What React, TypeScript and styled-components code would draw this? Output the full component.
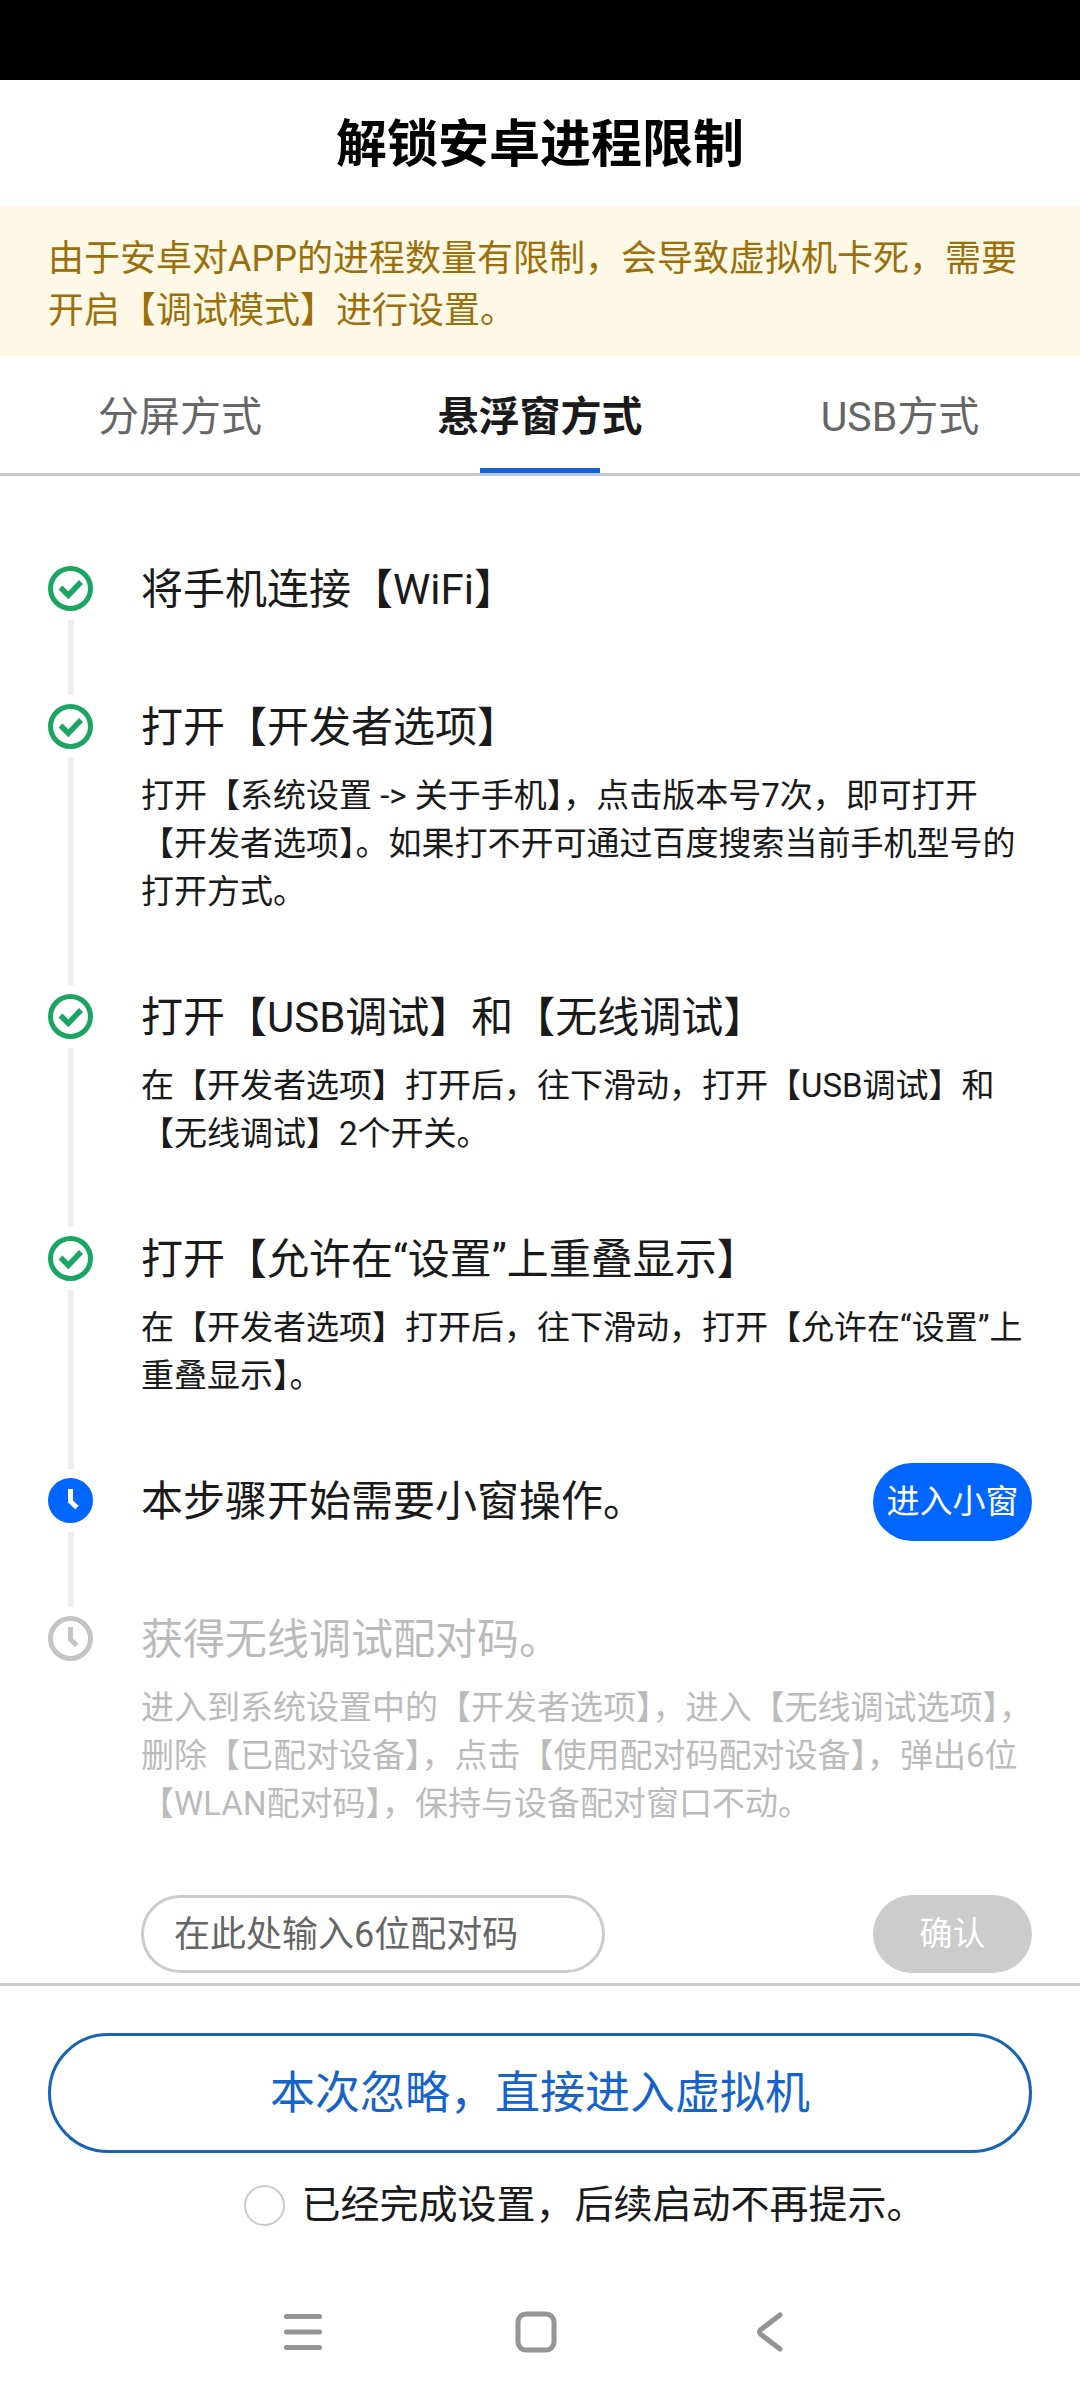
import React from "react";
import styled, { createGlobalStyle } from "styled-components";

type State = "done" | "active" | "pending";

const Global = createGlobalStyle`
  * { box-sizing: border-box; }
  body { margin: 0; background: #fff; font-family: Roboto, "Noto Sans CJK SC", sans-serif; color: #1a1a1a; }
  button, input { font-family: inherit; }
`;
const Screen = styled.div`display: flex; flex-direction: column; min-height: 100vh;`;
const StatusBar = styled.div`height: 80px; background: #000;`;
const Title = styled.h1`margin: 0; padding: 29px 0 25px; text-align: center; font-size: 51px; line-height: 72px; font-weight: 700; color: #000;`;
const Notice = styled.p`margin: 0; padding: 27px 48px 19px; background: #fef9e6; color: #9b6f0c; font-size: 36px; line-height: 52px;`;
const Tabs = styled.div`display: flex; border-bottom: 3px solid #c8c8c8; height: 120px;`;
const Tab = styled.button<{ $on?: boolean }>`
  flex: 1; position: relative; border: 0; background: none; padding: 4px 0 0; font-size: 41px; line-height: 60px;
  font-weight: ${p => (p.$on ? 700 : 400)}; color: ${p => (p.$on ? "#1a1a1a" : "#666")};
  &::after { content: ""; display: ${p => (p.$on ? "block" : "none")}; position: absolute; left: 50%; margin-left: -60px; bottom: 0; width: 120px; height: 5px; background: #1663d0; box-shadow: 0 3px 0 #b9c9e8; }
`;
const Steps = styled.ol`list-style: none; margin: 0; padding: 84px 48px 0;`;
const Item = styled.li`display: flex; gap: 48px; min-height: 138px;`;
const Rail = styled.div`display: flex; flex-direction: column; align-items: center; width: 45px; flex: none; padding-top: 6px; gap: 9px; svg { display: block; flex: none; }`;
const Line = styled.span`flex: 1; width: 6px; background: #efefef; margin-bottom: 3px;`;
const Body = styled.div<{ $dim: boolean; $last: boolean }>`flex: 1; min-width: 0; padding-bottom: ${p => (p.$last ? 10 : 72)}px; color: ${p => (p.$dim ? "#bbb" : "#1a1a1a")};`;
const Head = styled.div`display: flex; justify-content: space-between; align-items: center; height: 60px;`;
const Heading = styled.h2`margin: 0; font-size: 42px; line-height: 60px; font-weight: 400;`;
const Detail = styled.p`margin: 14px 0 0; font-size: 33px; line-height: 48px;`;
const Pill = styled.button`flex: none; width: 159px; height: 78px; padding: 0; border: 0; border-radius: 39px; background: #0066ff; color: #fff; font-size: 33px; line-height: 48px; &:disabled { background: #ccc; }`;
const Form = styled.form`display: flex; justify-content: space-between; margin-top: 67px;`;
const Code = styled.input`width: 464px; height: 78px; border: 3px solid #ccc; border-radius: 39px; padding: 2px 30px 0; font-size: 36px; background: #fff; &::placeholder { color: #666; opacity: 1; }`;
const Footer = styled.footer`border-top: 3px solid #ccc; padding: 47px 48px 0; display: flex; flex-direction: column; align-items: center;`;
const Skip = styled.button`width: 100%; height: 120px; padding: 2px 0 0; border: 3px solid #1663b8; border-radius: 60px; background: #fff; color: #1663cc; font-size: 45px; line-height: 60px;`;
const Agree = styled.label`display: flex; align-items: center; gap: 16px; margin-top: 24px; padding-left: 90px; font-size: 39px; line-height: 56px;`;
const Check = styled.input`appearance: none; margin: 0; width: 41px; height: 41px; border: 2px solid #ccc; border-radius: 50%;`;
const Nav = styled.nav`display: flex; justify-content: center; gap: 170px; margin-top: auto; padding: 0 8px 36px 0;`;
const NavButton = styled.button`border: 0; background: none; padding: 0; width: 64px; height: 64px; svg { display: block; }`;
const NavIcon = styled.svg.attrs({ width: 64, height: 64, viewBox: "0 0 64 64" })`fill: none; stroke: #949494; stroke-width: 5; stroke-linecap: round; stroke-linejoin: round;`;

const Icon = ({ state }: { state: State }) => {
  const c = state === "done" ? "#1aa562" : state === "active" ? "#0066ff" : "#c4c4c4";
  return (
    <svg width="45" height="45" viewBox="0 0 45 45" fill="none" aria-hidden="true">
      <circle cx="22.5" cy="22.5" r="20" stroke={c} strokeWidth="5" fill={state === "active" ? c : "none"} />
      {state === "done"
        ? <path d="M12.5 21.5l7.800 7.800L33 16" stroke={c} strokeWidth="5.5" />
        : <path d="M22.5 11v12.5l6.5 6" stroke={state === "active" ? "#fff" : c} strokeWidth="5" />}
    </svg>
  );
};

const steps: { title: string; detail?: string; state: State; action?: string; form?: boolean }[] = [
  { title: "将手机连接【WiFi】", state: "done" },
  { title: "打开【开发者选项】", state: "done", detail: "打开【系统设置 -> 关于手机】，点击版本号7次，即可打开【开发者选项】。如果打不开可通过百度搜索当前手机型号的打开方式。" },
  { title: "打开【USB调试】和【无线调试】", state: "done", detail: "在【开发者选项】打开后，往下滑动，打开【USB调试】和【无线调试】2个开关。" },
  { title: "打开【允许在“设置”上重叠显示】", state: "done", detail: "在【开发者选项】打开后，往下滑动，打开【允许在“设置”上重叠显示】。" },
  { title: "本步骤开始需要小窗操作。", state: "active", action: "进入小窗" },
  { title: "获得无线调试配对码。", state: "pending", form: true, detail: "进入到系统设置中的【开发者选项】，进入【无线调试选项】，删除【已配对设备】，点击【使用配对码配对设备】，弹出6位【WLAN配对码】，保持与设备配对窗口不动。" },
];

export default function App() {
  return (
    <Screen lang="zh-CN">
      <Global />
      <StatusBar />
      <Title>解锁安卓进程限制</Title>
      <Notice>由于安卓对APP的进程数量有限制，会导致虚拟机卡死，需要开启【调试模式】进行设置。</Notice>
      <Tabs role="tablist">
        <Tab role="tab">分屏方式</Tab>
        <Tab role="tab" aria-selected $on>悬浮窗方式</Tab>
        <Tab role="tab">USB方式</Tab>
      </Tabs>
      <Steps>
        {steps.map((s, i) => (
          <Item key={s.title}>
            <Rail><Icon state={s.state} />{i < steps.length - 1 && <Line />}</Rail>
            <Body $dim={s.state === "pending"} $last={i === steps.length - 1}>
              <Head><Heading>{s.title}</Heading>{s.action && <Pill type="button">{s.action}</Pill>}</Head>
              {s.detail && <Detail>{s.detail}</Detail>}
              {s.form && (
                <Form>
                  <Code aria-label="配对码" placeholder="在此处输入6位配对码" />
                  <Pill type="submit" disabled>确认</Pill>
                </Form>
              )}
            </Body>
          </Item>
        ))}
      </Steps>
      <Footer>
        <Skip type="button">本次忽略，直接进入虚拟机</Skip>
        <Agree><Check type="checkbox" />已经完成设置，后续启动不再提示。</Agree>
      </Footer>
      <Nav>
        <NavButton aria-label="菜单"><NavIcon><path d="M16.5 16.5h33M16.5 32h33M16.5 47.5h33" /></NavIcon></NavButton>
        <NavButton aria-label="主页"><NavIcon><rect x="14" y="14" width="36" height="36" rx="8" /></NavIcon></NavButton>
        <NavButton aria-label="返回"><NavIcon><path d="M42 15L23 29.5q-3 2.5 0 5L42 49" /></NavIcon></NavButton>
      </Nav>
    </Screen>
  );
}
